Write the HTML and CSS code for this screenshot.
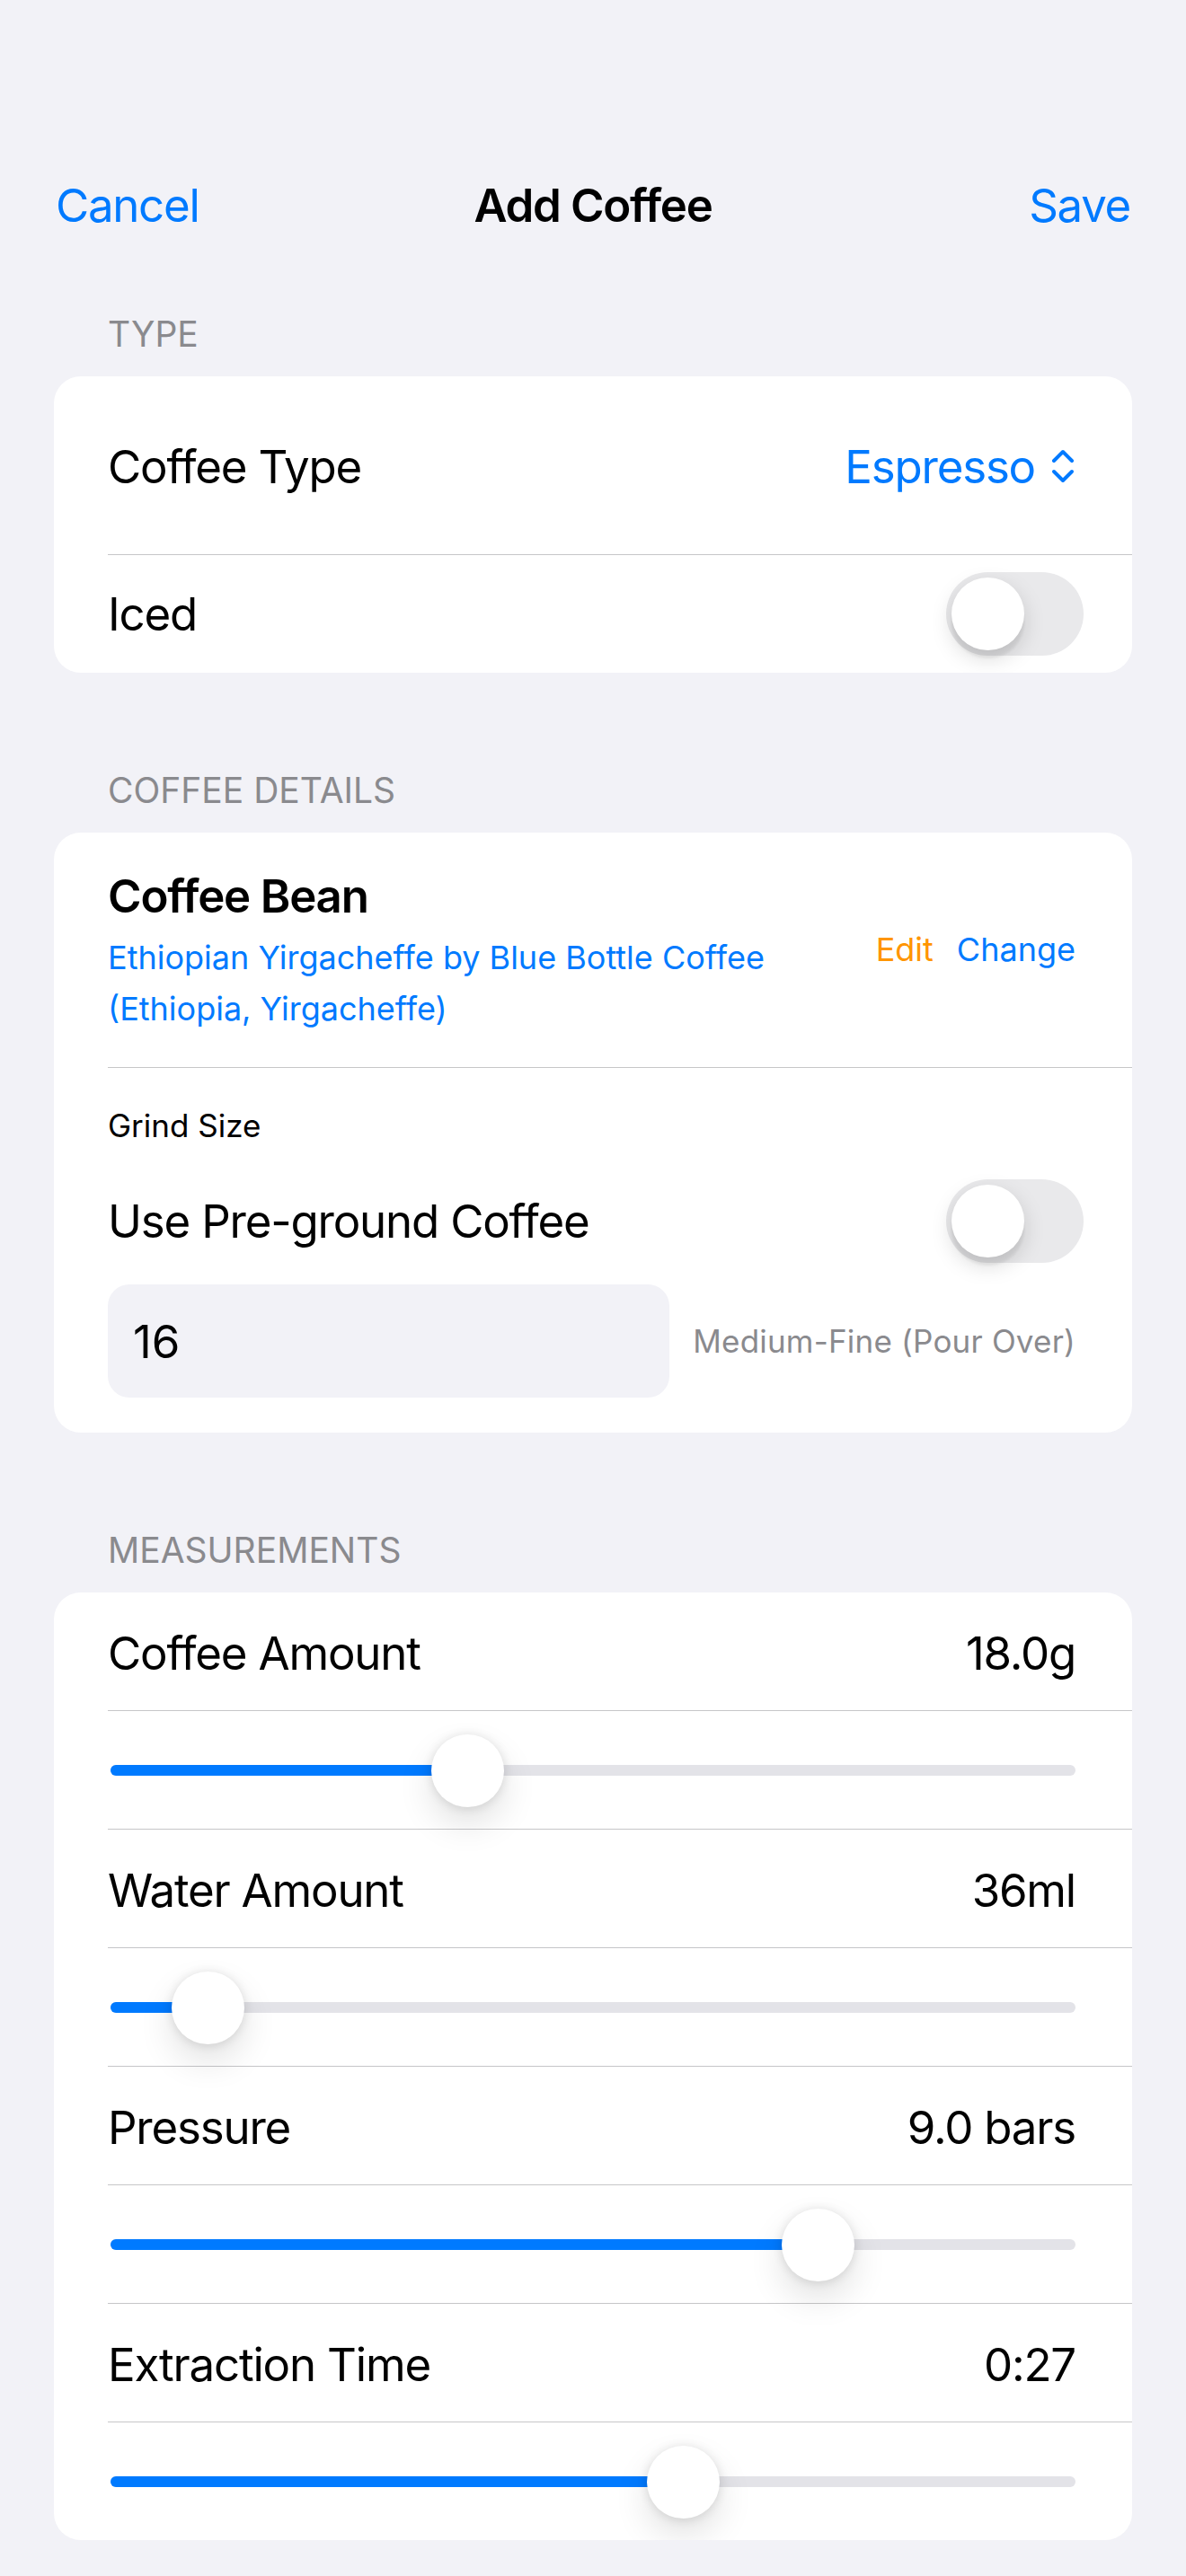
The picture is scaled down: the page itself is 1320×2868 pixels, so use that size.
FILE: index.html
```html
<!DOCTYPE html>
<html lang="en">
<head>
    <meta charset="UTF-8">
    <meta name="viewport" content="width=device-width, initial-scale=1.0">
    <title>Add Coffee</title>
    <link rel="stylesheet" href="styles.css">
</head>
<body>
    <div class="screen">
        <nav class="navbar">
            <span class="nav-button">Cancel</span>
            <span class="nav-title">Add Coffee</span>
            <span class="nav-button save">Save</span>
        </nav>

        <!-- Type -->
        <section class="group first">
            <h2 class="group-header">Type</h2>
            <div class="card">
                <div class="row picker-row">
                    <span class="label">Coffee Type</span>
                    <span class="picker">
                        Espresso
                        <svg class="chevrons" width="28" height="40" viewBox="0 0 28 40">
                            <path d="M4 14 L14 4 L24 14" />
                            <path d="M4 26 L14 36 L24 26" />
                        </svg>
                    </span>
                </div>
                <div class="divider"></div>
                <div class="row toggle-row">
                    <span class="label">Iced</span>
                    <span class="toggle"><span class="knob"></span></span>
                </div>
            </div>
        </section>

        <!-- Coffee details -->
        <section class="group">
            <h2 class="group-header">Coffee Details</h2>
            <div class="card">
                <div class="bean">
                    <div class="bean-title">Coffee Bean</div>
                    <div class="bean-body">
                        <div class="bean-name">
                            <span class="line">Ethiopian Yirgacheffe by Blue Bottle Coffee</span>
                            <span class="line">(Ethiopia, Yirgacheffe)</span>
                        </div>
                        <div class="bean-actions">
                            <span class="link-edit">Edit</span>
                            <span class="link-change">Change</span>
                        </div>
                    </div>
                </div>
                <div class="divider"></div>
                <div class="grind">
                    <div class="grind-title">Grind Size</div>
                    <div class="grind-toggle">
                        <span class="label">Use Pre-ground Coffee</span>
                        <span class="toggle"><span class="knob"></span></span>
                    </div>
                    <div class="grind-input">
                        <div class="text-field">16</div>
                        <span class="grind-hint">Medium-Fine (Pour Over)</span>
                    </div>
                </div>
            </div>
        </section>

        <!-- Measurements -->
        <section class="group">
            <h2 class="group-header">Measurements</h2>
            <div class="card">
                <div class="row">
                    <span class="label">Coffee Amount</span>
                    <span class="value">18.0g</span>
                </div>
                <div class="divider"></div>
                <div class="row slider-row">
                    <div class="slider">
                        <div class="fill" style="width: 37%"></div>
                        <div class="thumb" style="left: 37%"></div>
                    </div>
                </div>
                <div class="divider"></div>
                <div class="row">
                    <span class="label">Water Amount</span>
                    <span class="value">36ml</span>
                </div>
                <div class="divider"></div>
                <div class="row slider-row">
                    <div class="slider">
                        <div class="fill" style="width: 10.1%"></div>
                        <div class="thumb" style="left: 10.1%"></div>
                    </div>
                </div>
                <div class="divider"></div>
                <div class="row">
                    <span class="label">Pressure</span>
                    <span class="value">9.0 bars</span>
                </div>
                <div class="divider"></div>
                <div class="row slider-row">
                    <div class="slider">
                        <div class="fill" style="width: 73.3%"></div>
                        <div class="thumb" style="left: 73.3%"></div>
                    </div>
                </div>
                <div class="divider"></div>
                <div class="row">
                    <span class="label">Extraction Time</span>
                    <span class="value">0:27</span>
                </div>
                <div class="divider"></div>
                <div class="row slider-row">
                    <div class="slider">
                        <div class="fill" style="width: 59.3%"></div>
                        <div class="thumb" style="left: 59.3%"></div>
                    </div>
                </div>
            </div>
        </section>
    </div>
</body>
</html>
```

FILE: styles.css
```css
body {
    margin: 0;
    background-color: #f2f2f7;
    font-family: Inter, "Noto Sans", sans-serif;
    color: #000000;
}
.screen {
    width: 1320px;
    height: 2868px;
    padding-top: 162px;
    box-sizing: border-box;
}
.navbar {
    height: 132px;
    padding: 0 62px;
    display: grid;
    grid-template-columns: 1fr auto 1fr;
    align-items: center;
    font-size: 51px;
    letter-spacing: -1.3px;
}
.nav-button {
    color: #007aff;
}
.nav-button.save {
    justify-self: end;
}
.nav-title {
    font-weight: 600;
}
.group {
    margin: 107px 60px 0;
}
.group.first {
    margin-top: 54px;
}
.group-header {
    margin: 0 0 23px 60px;
    font-size: 39px;
    font-weight: 400;
    line-height: 48px;
    text-transform: uppercase;
    color: #8a8a8e;
}
.card {
    background-color: #ffffff;
    border-radius: 30px;
    overflow: hidden;
}
.divider {
    height: 1px;
    margin-left: 60px;
    background-color: #c6c6c8;
}
.row {
    height: 131px;
    padding: 4px 63px 0 60px;
    box-sizing: border-box;
    display: flex;
    justify-content: space-between;
    align-items: center;
    font-size: 51px;
    letter-spacing: -1.2px;
}
.picker-row {
    height: 198px;
    padding-top: 2px;
}
.toggle-row {
    padding-top: 0;
    padding-right: 54px;
}
.picker {
    display: flex;
    align-items: center;
    gap: 17px;
    color: #007aff;
}
.chevrons {
    fill: none;
    stroke: #007aff;
    stroke-width: 4;
    stroke-linecap: round;
    stroke-linejoin: round;
}
.toggle {
    width: 153px;
    height: 93px;
    border-radius: 47px;
    background-color: #e9e9eb;
    padding: 6px;
    box-sizing: border-box;
    display: flex;
}
.knob {
    width: 81px;
    height: 81px;
    border-radius: 50%;
    background-color: #ffffff;
    box-shadow: 0 9px 24px rgba(0, 0, 0, 0.15), 0 9px 3px rgba(0, 0, 0, 0.06);
}
.bean {
    padding: 41px 63px 36px 60px;
}
.bean-title {
    font-size: 51px;
    font-weight: 600;
    line-height: 60px;
    letter-spacing: -1.2px;
}
.bean-body {
    margin-top: 10px;
    display: flex;
    justify-content: space-between;
    align-items: flex-start;
    font-size: 36px;
    color: #007aff;
}
.bean-name .line {
    display: block;
    line-height: 57px;
}
.bean-actions {
    display: flex;
    gap: 26px;
    line-height: 39px;
}
.link-edit {
    color: #ff9500;
}
.grind {
    padding: 44px 63px 39px 60px;
}
.grind-title {
    font-size: 35px;
    line-height: 40px;
}
.grind-toggle {
    margin-top: 40px;
    margin-right: -9px;
    display: flex;
    justify-content: space-between;
    align-items: center;
    font-size: 51px;
    letter-spacing: -1.2px;
}
.grind-input {
    margin-top: 24px;
    display: flex;
    justify-content: space-between;
    align-items: center;
}
.text-field {
    width: 625px;
    height: 126px;
    padding-left: 28px;
    box-sizing: border-box;
    border-radius: 24px;
    background-color: #f2f2f7;
    display: flex;
    align-items: center;
    font-size: 51px;
}
.grind-hint {
    font-size: 35px;
    letter-spacing: 0.2px;
    color: #8a8a8e;
}
.slider-row {
    padding-top: 0;
    padding-left: 63px;
}
.slider {
    position: relative;
    flex: 1;
    height: 12px;
    border-radius: 6px;
    background-color: #e3e3e8;
}
.fill {
    height: 100%;
    border-radius: 6px 0 0 6px;
    background-color: #007aff;
}
.thumb {
    position: absolute;
    top: 50%;
    width: 81px;
    height: 81px;
    margin: -40px 0 0 -40px;
    border-radius: 50%;
    background-color: #ffffff;
    box-shadow: 0 18px 39px rgba(0, 0, 0, 0.12), 0 1px 12px rgba(0, 0, 0, 0.12);
}
```
